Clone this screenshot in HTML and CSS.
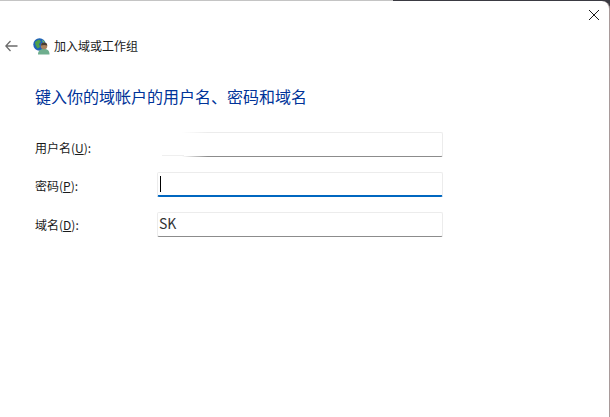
FILE: index.html
```html
<!DOCTYPE html>
<html lang="zh-CN">
<head>
<meta charset="utf-8">
<title>加入域或工作组</title>
<link rel="stylesheet" href="styles.css">
</head>
<body>
<div class="window">
  <div class="titlebar">
    <svg class="close" width="12" height="12" viewBox="0 0 12 12"><path d="M1 1 L11 11 M11 1 L1 11" stroke="#1a1a1a" stroke-width="1" fill="none"/></svg>
  </div>
  <div class="nav">
    <svg class="back" width="14" height="12" viewBox="0 0 14 12"><path d="M12.5 6 H0.8 M5.5 1 L0.8 6 L5.5 11" stroke="#6b6b6b" stroke-width="1.3" fill="none"/></svg>
    <svg class="appicon" width="17" height="17" viewBox="0 0 17 17">
      <circle cx="6.5" cy="6.5" r="6.2" fill="#1f62b8"/>
      <path d="M2 4 L6 1.5 L8 3.5 L6 6 L7 9 L4.5 10.5 L2.5 7 Z" fill="#4fa04a"/>
      <path d="M9 1.5 L12 4 L10 5.5 Z" fill="#6fb86a"/>
      <path d="M5 16.5 C5 12.5 7.5 11 11 11 C14.5 11 16.5 12.5 16.5 16.5 Z" fill="#6fae8e"/>
      <circle cx="11" cy="8" r="3.3" fill="#a9835f"/>
      <path d="M8 7.5 C8 5 10 4.4 11.2 4.4 C13 4.4 14.2 5.6 14.2 7.5 C12.5 6.8 10 6.8 8 7.5 Z" fill="#4a3b30"/>
    </svg>
    <span class="navtitle">加入域或工作组</span>
  </div>
  <h1 class="heading">键入你的域帐户的用户名、密码和域名</h1>
  <form class="form">
    <label class="label label-user">用户名(<u>U</u>):</label>
    <div class="field"><span class="smudge"></span></div>
    <label class="label label-pass">密码(<u>P</u>):</label>
    <div class="field field-focus"><span class="caret"></span></div>
    <label class="label label-domain">域名(<u>D</u>):</label>
    <div class="field field-text">SK</div>
  </form>
</div>
</body>
</html>
```

FILE: styles.css
```css
html, body {
  margin: 0;
  padding: 0;
  width: 610px;
  height: 417px;
  overflow: hidden;
}
body {
  font-family: "Noto Sans CJK SC", "Noto Sans", sans-serif;
  color: #1a1a1a;
  background: linear-gradient(to right, #c4c4c4 393px, #3a3a42 393px);
}
.window {
  box-sizing: border-box;
  margin-top: 1px;
  width: 610px;
  height: 416px;
  background: #fff;
  border-right: 1px solid #a89a9a;
  border-top-right-radius: 8px;
  display: flex;
  flex-direction: column;
}
.titlebar {
  height: 24px;
  display: flex;
  justify-content: flex-end;
  align-items: flex-start;
  padding: 8px 9px 0 0;
  box-sizing: border-box;
}
.nav {
  display: flex;
  align-items: center;
  height: 20px;
  margin-top: 11px;
  padding-left: 5px;
}
.appicon { margin-left: 14px; }
.navtitle {
  margin-left: 4px;
  font-size: 12px;
  line-height: 20px;
}
.heading {
  margin: 28px 0 0 35px;
  font-size: 16px;
  font-weight: 400;
  line-height: 24px;
  color: #003399;
}
.form {
  margin: 24px 0 0 35px;
  display: grid;
  grid-template-columns: 122px 286px;
  row-gap: 15px;
  align-items: center;
}
.label {
  font-size: 12px;
  line-height: 25px;
}
.label-user { padding-top: 3px; margin-bottom: -3px; }
.label-pass { padding-top: 1px; margin-bottom: -1px; }
.label-domain { margin-top: -1px; }
.field {
  box-sizing: border-box;
  height: 25px;
  border: 1px solid #ececec;
  border-bottom: 1px solid #8c8c8c;
  border-radius: 2px;
  background: #fff;
  position: relative;
}
.field-text {
  padding-left: 1px;
  font-size: 14px;
  line-height: 21px;
  color: #333;
}
.field-focus {
  border-bottom: 2px solid #0067c0;
  display: flex;
  align-items: center;
}
.caret {
  width: 1px;
  height: 16px;
  background: #000;
  margin-left: 2px;
}
.smudge {
  position: absolute;
  left: -2px;
  top: -2px;
  width: 52px;
  height: 27px;
  background: linear-gradient(to right, #fff 50%, rgba(255,255,255,0));
}
.smudge::after {
  content: "";
  position: absolute;
  left: 6px;
  bottom: 2px;
  width: 22px;
  height: 1px;
  background: #efefef;
}
```
